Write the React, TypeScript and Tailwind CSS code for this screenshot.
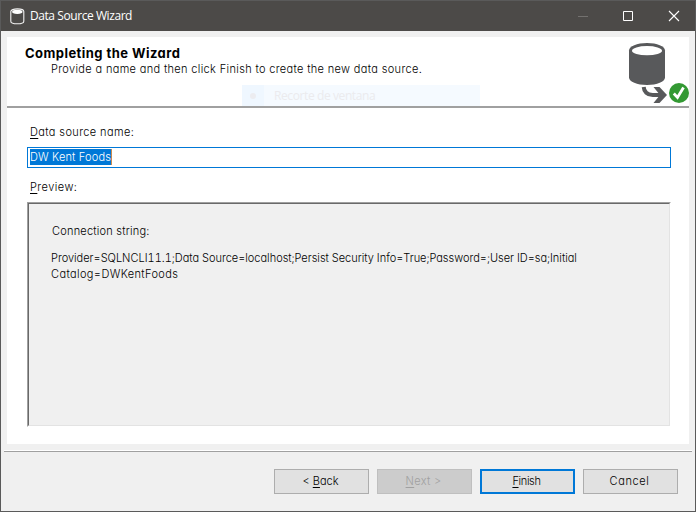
import React from 'react';

function DatabaseIcon() {
  return (
    <svg width="15" height="17" viewBox="0 0 15 17" fill="none">
      <path d="M.8 3.6v9.6c0 1.6 3 2.6 6.5 2.6s6.500-1 6.500-2.600V3.600C13.800 1.900 10.800.9 7.300.9S.8 1.900.8 3.600Z" stroke="#f2f2f2" strokeWidth="1.1" />
      <ellipse cx="7.300" cy="3.800" rx="5.200" ry="2.100" fill="#fff" />
    </svg>
  );
}

function WizardArt() {
  return (
    <svg width="61" height="62" viewBox="0 0 61 62" fill="none">
      <path d="M1 7.500C1 3.200 9 0 19 0s18 3.200 18 7.500v27c0 4.300-8 7.500-18 7.500S1 38.800 1 34.500Z" fill="#58595b" />
      <ellipse cx="19" cy="7.700" rx="15" ry="4.600" fill="#fff" />
      <path d="M15.700 44c.3 4.500 3.500 8 9 8H36" stroke="#58595b" strokeWidth="4" />
      <path d="M25.500 44h6l7.500 8-7.500 8h-6l6.500-8Z" fill="#58595b" />
      <circle cx="51" cy="50" r="10" fill="#339933" />
      <path d="m45.800 50.500 3.700 4L55.500 44.500" stroke="#fff" strokeWidth="2.800" />
    </svg>
  );
}

type ButtonProps = { children: React.ReactNode; tone: string; disabled?: boolean };

function WizardButton({ children, tone, disabled }: ButtonProps) {
  return (
    <button disabled={disabled} className={`flex h-[25px] w-[95px] items-center justify-center whitespace-pre pb-px pr-[2px] ${tone}`}>
      {children}
    </button>
  );
}

function Key({ children }: { children: React.ReactNode }) {
  return <span className="underline decoration-1 underline-offset-2">{children}</span>;
}

export default function App() {
  return (
    <div className="flex h-[512px] w-[696px] flex-col overflow-hidden border border-[#5a5a5a] bg-[#f0f0f0] font-['Century_Gothic',Inter,sans-serif] text-[11px] font-light leading-4 text-black [font-feature-settings:'cv11']">
      <header className="flex h-[30px] shrink-0 items-center bg-[#4c4a48] text-white">
        <div className="ml-[9px]"><DatabaseIcon /></div>
        <h1 className="ml-[5px] flex-1 whitespace-nowrap font-['Open_Sans',sans-serif] text-[12px] font-normal tracking-[-0.43px]">Data Source Wizard</h1>
        <svg width="104" height="12" viewBox="0 0 104 12" fill="none" className="mr-[13px] shrink-0">
          <path d="M0 6.500h10" stroke="#73716f" />
          <path d="M45.500 1.500h9v9h-9z" stroke="#fff" />
          <path d="m91 1 10 10m0-10L91 11" stroke="#fff" strokeWidth="1.100" />
        </svg>
      </header>

      <main className="mx-[6px] mt-[6px] flex h-[407px] shrink-0 flex-col bg-white">
        <section className="flex h-[71px] shrink-0 justify-between border-b-2 border-[#a0a0a0]">
          <div className="flex flex-col pt-2">
            <h2 className="ml-[18px] whitespace-nowrap text-[13px] font-bold leading-4 tracking-[0.45px]">Completing the Wizard</h2>
            <p className="ml-11 whitespace-nowrap leading-4 tracking-[0.34px]">Provide a name and then click Finish to create the new data source.</p>
            <div className="ml-[235px] mt-[8px] flex h-[21px] w-[238px] items-center bg-[#f5faff]">
              <div className="flex h-full w-[22px] items-center justify-center bg-[#eff7ff]">
                <span className="size-1.5 rounded-full bg-[#ececf0]" />
              </div>
              <span className="ml-[10px] whitespace-nowrap font-['Open_Sans',sans-serif] text-[12px] font-normal tracking-[-0.4px] text-[#ebebee]">Recorte de ventana</span>
            </div>
          </div>
          <div className="mt-[6px] h-[62px] shrink-0"><WizardArt /></div>
        </section>

        <section className="flex flex-col px-5 pt-4">
          <label className="ml-[3px] h-4 whitespace-nowrap tracking-[0.38px]"><Key>D</Key>ata source name:</label>
          <div className="mt-[7px] flex h-[21px] w-[644px] items-center border border-[#0078d7] bg-white pl-[2px]">
            <span className="-mt-px h-4 w-[82px] whitespace-nowrap border-r border-[#c88a50] bg-[#0078d7] tracking-[0.16px] text-white">DW Kent Foods</span>
          </div>
          <div className="ml-[3px] mt-[11px] h-4 whitespace-nowrap tracking-[0.45px]"><Key>P</Key>review:</div>
          <div className="mt-[7px] h-[225px] w-[644px] border border-b-white border-l-[#a0a0a0] border-r-white border-t-[#a0a0a0]">
            <div className="h-full border border-b-[#e3e3e3] border-l-[#696969] border-r-[#e3e3e3] border-t-[#696969] bg-[#f0f0f0] pl-[22px] pt-[19px]">
              <p className="ml-px whitespace-nowrap tracking-[0.22px]">Connection string:</p>
              <p className="mt-[11px] whitespace-nowrap tracking-[-0.01px] [font-feature-settings:'cv11','tnum']">Provider=SQLNCLI11.1;Data Source=localhost;Persist Security Info=True;Password=;User ID=sa;Initial</p>
              <p className="whitespace-nowrap tracking-[0.38px]">Catalog=DWKentFoods</p>
            </div>
          </div>
        </section>
      </main>

      <div className="mx-[3px] mt-[6px] h-[2px] shrink-0 border-b border-[#a0a0a0] bg-white" />
      <footer className="mr-[17px] mt-[17px] flex justify-end gap-2">
        <WizardButton tone="border border-[#adadad] bg-[#e1e1e1]"><span>&lt; <Key>B</Key>ack</span></WizardButton>
        <WizardButton disabled tone="border border-[#bfbfbf] bg-[#cccccc] text-[#a0a0a0]"><span className="tracking-[0.3px]"><Key>N</Key>ext &gt;</span></WizardButton>
        <WizardButton tone="border-2 border-[#0078d7] bg-[#e1e1e1]"><span className="tracking-[-0.35px]"><Key>F</Key>inish</span></WizardButton>
        <WizardButton tone="border border-[#adadad] bg-[#e1e1e1]"><span className="tracking-[0.6px]">Cancel</span></WizardButton>
      </footer>
    </div>
  );
}
